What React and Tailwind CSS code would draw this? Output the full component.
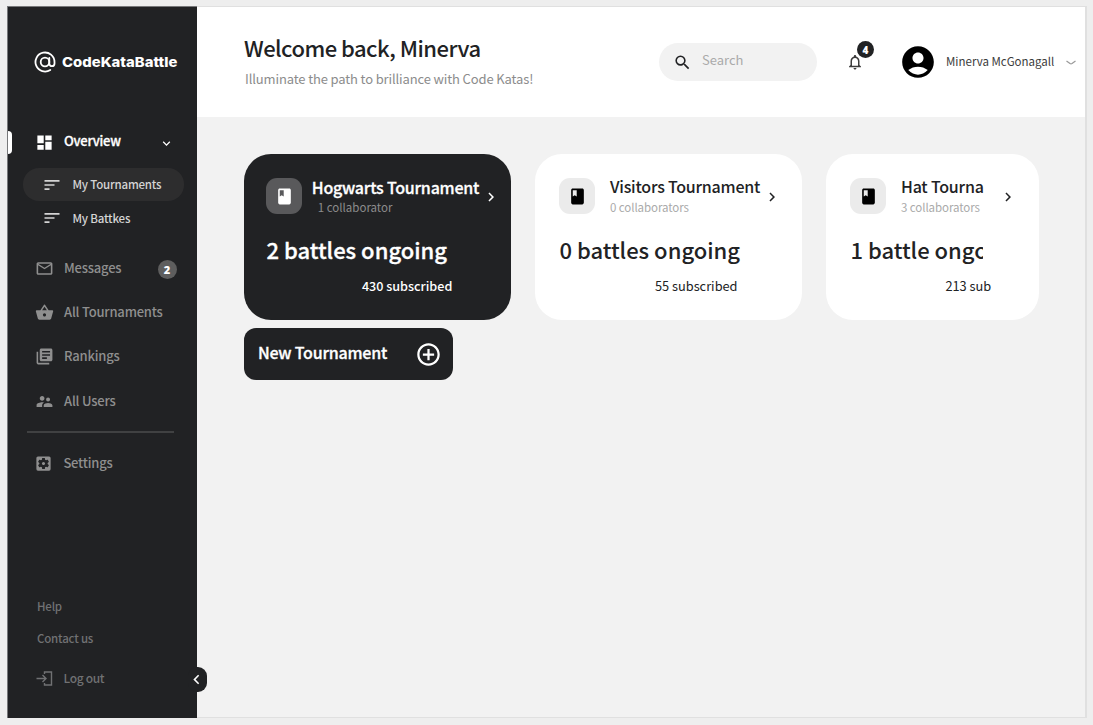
import React from 'react';
import {
  MdAccountCircle, MdAddCircleOutline, MdBook, MdChevronLeft, MdChevronRight,
  MdDashboard, MdExpandMore, MdLibraryBooks, MdMailOutline, MdNotificationsNone, MdSearch,
  MdSettingsApplications, MdShoppingBasket, MdSort, MdSupervisorAccount,
} from 'react-icons/md';

function NavItem({ icon: Icon, label, className, badge }) {
  return (
    <div className={`flex h-8 shrink-0 items-center text-[#8f8f8f] ${className}`}>
      <span className="flex w-[29px] shrink-0"><Icon className="text-[19px]" /></span>
      <span className="text-[13px] leading-8 font-medium tracking-[-0.2px]">{label}</span>
      {badge && (
        <span className="mt-[2px] mr-[20.5px] ml-auto flex size-[19px] items-center justify-center rounded-full bg-[#5e5e5e] font-[Open_Sans,sans-serif] text-[11px] leading-none font-extrabold text-white">{badge}</span>
      )}
    </div>
  );
}

function Sidebar() {
  return (
    <aside className="relative flex w-[190px] shrink-0 flex-col border-t border-l border-[#77787a] bg-[#212224]">
      <div className="mt-[39px] flex h-8 shrink-0 items-center pl-[26px] text-white">
        <svg className="mr-[6px] size-[22px] shrink-0" viewBox="0 0 22 22" fill="none" stroke="currentColor" strokeWidth="1.8" strokeLinecap="round">
          <path d="M16.300 18.900A9.500 9.500 0 1 1 20.500 11V12.400C20.500 16 15.300 16.100 15.300 12.400V7" />
          <circle cx="11" cy="11" r="4.300" />
        </svg>
        <span className="inline-block origin-left scale-x-[1.1] font-[Inter,sans-serif] text-[13.5px] leading-8 font-extrabold">CodeKataBattle</span>
      </div>
      <div className="relative mt-12 flex h-8 shrink-0 items-center pl-[27px] text-white">
        <span className="absolute top-[5px] left-0 h-[23px] w-1 rounded-r bg-white" />
        <span className="w-[29px] shrink-0"><MdDashboard className="text-[19px]" /></span>
        <span className="-mt-[2px] text-[13px] leading-8 font-medium tracking-[-0.25px] [-webkit-text-stroke:0.3px]">Overview</span>
        <MdExpandMore className="mt-[2px] mr-[23px] ml-auto text-[15px]" />
      </div>
      <div className="mt-[10px] ml-[15px] flex h-[33px] w-[161px] shrink-0 items-center rounded-[16px] bg-[#2d2d2e] pl-[19px] text-[#d4d4d4]">
        <MdSort className="mr-[10.5px] text-[20px]" />
        <span className="text-[11.5px] font-medium tracking-[-0.2px]">My Tournaments</span>
      </div>
      <div className="ml-[15px] flex h-[34px] shrink-0 items-center pl-[19px] text-[#d4d4d4]">
        <MdSort className="mr-[10.5px] text-[20px]" />
        <span className="mt-[2px] text-[11.5px] font-medium tracking-[-0.2px]">My Battkes</span>
      </div>
      <NavItem icon={MdMailOutline} label="Messages" className="mt-[17px] pl-[27px]" badge="2" />
      <NavItem icon={MdShoppingBasket} label="All Tournaments" className="mt-3 pl-[27px]" />
      <NavItem icon={MdLibraryBooks} label="Rankings" className="mt-3 pl-[27px]" />
      <NavItem icon={MdSupervisorAccount} label="All Users" className="mt-[13px] pl-[27px]" />
      <div className="mt-[14px] ml-[19px] h-[2px] w-[147px] shrink-0 bg-[#404142]" />
      <NavItem icon={MdSettingsApplications} label="Settings" className="mt-[14px] pl-[26.4px]" />
      <div className="mt-auto flex flex-col pl-[29px] text-[11.5px] leading-5 font-medium tracking-[-0.2px] text-[#707173]">
        <span className="mb-3">Help</span>
        <span>Contact us</span>
      </div>
      <div className="mt-[14px] mb-[24px] flex h-8 shrink-0 items-center pl-[28px] text-[#707173]">
        <svg className="mr-[10.5px] size-[17px]" viewBox="0 0 17 17" fill="none" stroke="currentColor" strokeWidth="1.4">
          <path d="M0.5 8.5H10M6.5 5L10 8.5L6.5 12M8.500 4V2H15.500V15H8.500V13" />
        </svg>
        <span className="text-[12px] font-medium tracking-[-0.35px]">Log out</span>
      </div>
      <span className="absolute right-[-9.5px] bottom-[26px] flex h-[25px] w-[19px] items-center justify-center rounded-[9px] bg-[#212224] pr-px text-white">
        <MdChevronLeft className="shrink-0 text-[19px]" />
      </span>
    </aside>
  );
}

function Header() {
  return (
    <header className="flex h-[110px] shrink-0 bg-white pl-12">
      <div className="w-[414px] shrink-0 pt-6">
        <h1 className="-ml-px text-[22px] leading-8 font-medium tracking-[-0.52px] text-[#212224]">Welcome back, Minerva</h1>
        <p className="mt-[6px] text-[13px] leading-5 tracking-[-0.13px] text-[#8c8c8c]">Illuminate the path to brilliance with Code Katas!</p>
      </div>
      <div className="mt-9 flex h-[38px] w-[158px] shrink-0 items-center rounded-full bg-[#f2f2f2] pl-[14px]">
        <MdSearch className="mr-[10px] text-[19px] text-[#212224]" />
        <span className="-mt-[5px] text-[13px] leading-8 text-[#aaa]">Search</span>
      </div>
      <div className="relative mt-[46px] ml-[29px] h-5 w-[18px] shrink-0 text-[#3c3c3c]">
        <MdNotificationsNone className="text-[18px]" />
        <span className="absolute -top-[12px] left-[11px] flex size-[17px] items-center justify-center rounded-full bg-[#212224] font-[Open_Sans,sans-serif] text-[10px] leading-none font-extrabold text-white">4</span>
      </div>
      <MdAccountCircle className="mt-[36px] ml-[35px] shrink-0 text-[38px] text-black" />
      <span className="mt-[44px] ml-[9px] text-[11.5px] leading-5 text-[#3c3c3c]">Minerva McGonagall</span>
      <svg className="mt-[52px] ml-3 h-[7px] w-[10px]" viewBox="0 0 10 7" fill="none" stroke="#999" strokeWidth="1.2"><path d="M0.5 2L4 4.600Q5 5.200 6 4.600L9.500 2" /></svg>
    </header>
  );
}

function Card({ dark, className, gap, title, titleClass, people, peopleClass, battles, battlesClass, subscribed, subClass }) {
  return (
    <article className={`h-[166px] shrink-0 rounded-[27px] pt-6 ${dark ? 'bg-[#212224] text-white' : 'bg-white text-[#212224]'} ${className}`}>
      <div className="flex h-9">
        <span className={`flex size-9 shrink-0 items-center justify-center rounded-[11px] ${dark ? 'bg-[#59595b] text-white' : 'bg-[#ebebeb] text-black'}`}>
          <MdBook className="text-[19px]" />
        </span>
        <div className={`flex flex-col justify-between whitespace-nowrap ${gap}`}>
          <span className={`h-5 text-[16px] leading-5 font-medium ${titleClass}`}>{title}</span>
          <span className={`-mb-px text-[11.5px] leading-4 ${peopleClass}`}>{people}</span>
        </div>
        <MdChevronRight className="mt-[10px] shrink-0 text-[18px]" />
      </div>
      <div className={`mt-[19px] h-8 overflow-hidden text-[22px] leading-8 font-medium whitespace-nowrap ${battlesClass}`}>{battles}</div>
      <div className={`mt-[11px] leading-5 whitespace-nowrap ${subClass}`}>{subscribed}</div>
    </article>
  );
}

export default function App() {
  return (
    <div className="h-[725px] w-[1093px] overflow-hidden bg-[#eeeeee] pt-[6px] pl-[7px] font-[Noto_Sans_CJK_SC,sans-serif]">
      <div className="flex h-[712px] w-[1080px]">
        <Sidebar />
        <div className="flex min-w-0 flex-1 flex-col border-t border-r-2 border-b border-[#e0e0e0] bg-[#f2f2f2]">
          <Header />
          <main className="flex flex-col pt-[37px] pl-[47.4px]">
            <div className="flex gap-6">
              <Card
                dark className="w-[267px] pl-[22px]" gap="ml-[9.4px] w-[170.6px]"
                title="Hogwarts Tournament" titleClass="-mt-px tracking-[-0.22px] [-webkit-text-stroke:0.3px]"
                people="1 collaborator" peopleClass="pl-[6px] text-[#8c8c8c]"
                battles="2 battles ongoing" battlesClass="w-[220px] [-webkit-text-stroke:0.3px]"
                subscribed="430 subscribed" subClass="pl-[95.500px] text-[12.6px] font-medium"
              />
              <Card
                className="w-[267px] pl-[24px]" gap="ml-[14.6px] w-[153px]"
                title="Visitors Tournament" titleClass="-mt-[2px] tracking-[-0.23px]"
                people="0 collaborators" peopleClass="text-[#aaaaaa] tracking-[-0.07px]"
                battles="0 battles ongoing" battlesClass="w-[220px]"
                subscribed="55 subscribed" subClass="pl-[95.500px] text-[12.8px]"
              />
              <Card
                className="w-[213px] pl-[24px]" gap="ml-[14.6px] w-[98.4px]"
                title="Hat Tourna" titleClass="-mt-[2px] tracking-[-0.2px]"
                people="3 collaborators" peopleClass="text-[#aaaaaa] tracking-[-0.07px]"
                battles="1 battle ongoing" battlesClass="w-[132.5px]"
                subscribed="213 sub" subClass="pl-[95px] text-[12.8px]"
              />
            </div>
            <button className="mt-2 flex h-[52px] w-[208.6px] items-center rounded-[12px] bg-[#212224] pl-[13.6px] text-white">
              <span className="-mt-[5px] text-[16px] leading-6 font-medium tracking-[-0.22px] [-webkit-text-stroke:0.3px]">New Tournament</span>
              <MdAddCircleOutline className="mt-px mr-[11px] ml-auto text-[27px]" />
            </button>
          </main>
        </div>
      </div>
    </div>
  );
}
